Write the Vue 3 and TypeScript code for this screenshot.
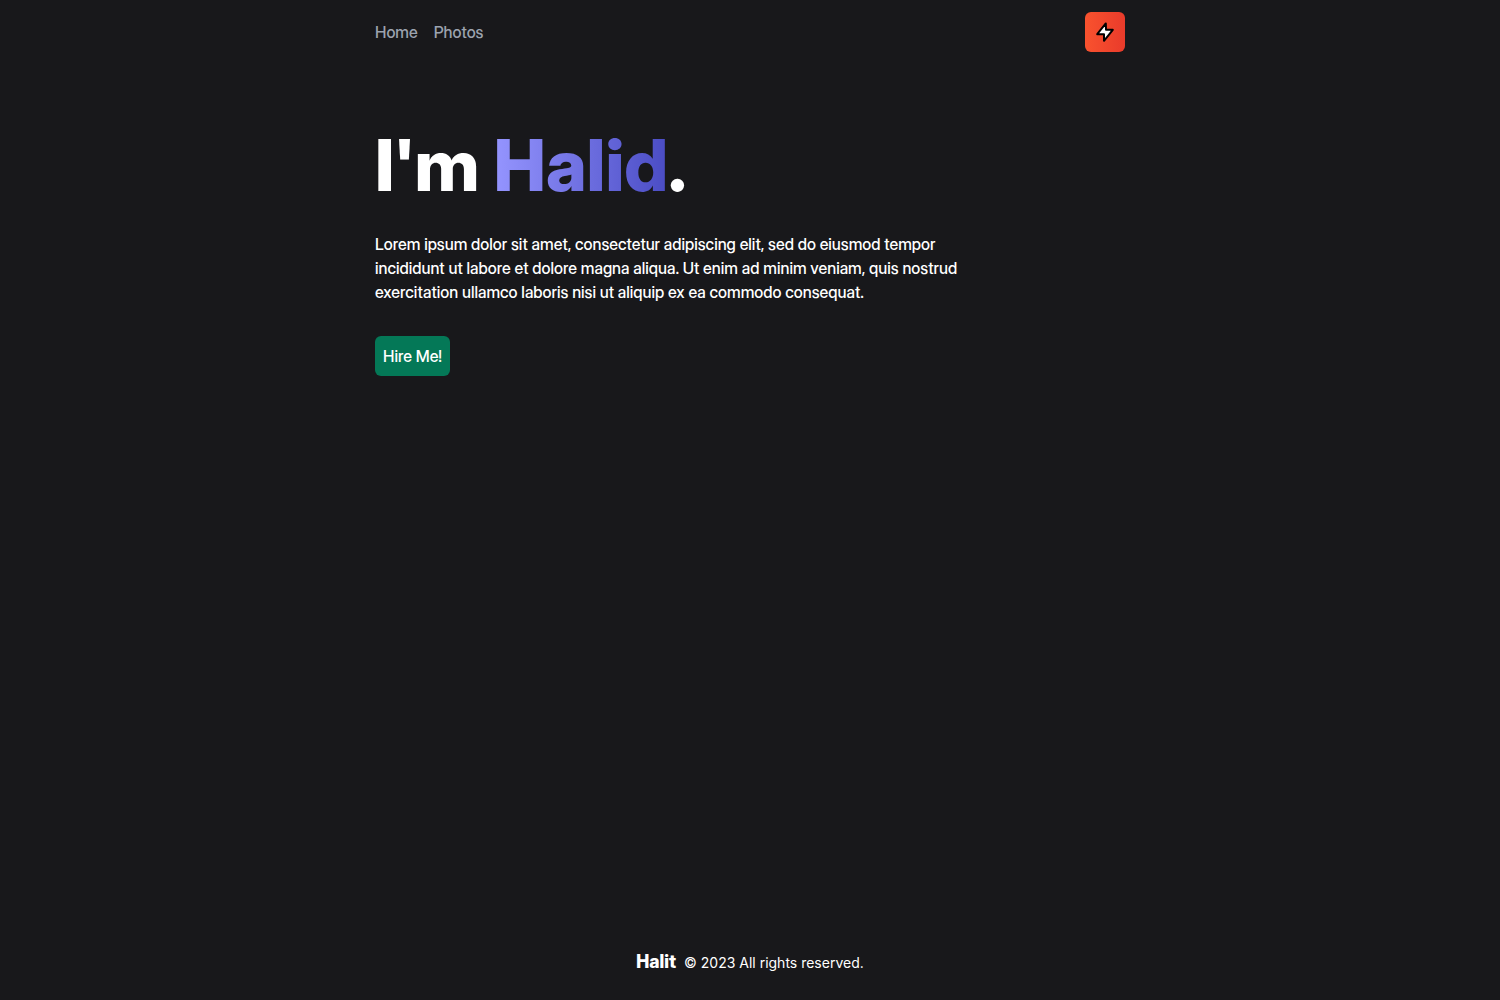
<script setup lang="ts">
interface NavItem {
  label: string
  href: string
}

const navItems: NavItem[] = [
  { label: 'Home', href: '#home' },
  { label: 'Photos', href: '#photos' },
]
</script>

<template>
  <div class="page">
    <header class="header">
      <nav class="nav" aria-label="Main">
        <a v-for="item in navItems" :key="item.href" class="nav-link" :href="item.href">{{ item.label }}</a>
      </nav>
      <button class="theme-toggle" type="button" aria-label="Toggle theme">
        <svg class="bolt" viewBox="0 0 20 20" fill="#fff" stroke="#000" stroke-width="2" stroke-linejoin="round" aria-hidden="true">
          <path d="M10.8 1.4 2.2 12.2H9L9 18.8 17.8 7.8H11z" />
        </svg>
      </button>
    </header>
    <main class="hero">
      <h1 class="title">I'm <span class="name">Halid</span>.</h1>
      <p class="intro">
        Lorem ipsum dolor sit amet, consectetur adipiscing elit, sed do eiusmod tempor incididunt ut labore et dolore
        magna aliqua. Ut enim ad minim veniam, quis nostrud exercitation ullamco laboris nisi ut aliquip ex ea commodo
        consequat.
      </p>
      <button class="hire" type="button">Hire Me!</button>
    </main>
    <footer class="footer">
      <strong class="brand">Halit</strong>
      <small class="copyright">© 2023 All rights reserved.</small>
    </footer>
  </div>
</template>

<style>
body {
  margin: 0;
  background: #18181b;
}
</style>

<style scoped>
.page {
  box-sizing: border-box;
  display: flex;
  flex-direction: column;
  width: 50%;
  min-width: 320px;
  min-height: 100vh;
  margin: 0 auto;
  color: #fff;
  font-family: "Inter Display", Inter, sans-serif;
  font-size: 16px;
  font-weight: 500;
  line-height: 24px;
}

.header {
  display: flex;
  align-items: center;
  justify-content: space-between;
  padding: 12px 0;
}

.nav {
  display: flex;
  gap: 16px;
}

.nav-link {
  color: #9ca3af;
  text-decoration: none;
}

.theme-toggle {
  display: flex;
  align-items: center;
  justify-content: center;
  width: 40px;
  height: 40px;
  padding: 0;
  border: 0;
  border-radius: 6px;
  background: linear-gradient(to right, #f9522e, #e93b2b);
  cursor: pointer;
}

.bolt {
  width: 20px;
  height: 20px;
}

.hero {
  flex: 1;
  padding-top: 64px;
}

.title {
  margin: 0 0 30px;
  font-size: 72px;
  font-weight: 800;
  line-height: 74px;
}

.name {
  background: linear-gradient(to right, #9595ff, #4a4cc4);
  background-clip: text;
  color: transparent;
}

.intro {
  max-width: 600px;
  margin: 0 0 32px;
}

.hire {
  padding: 8px;
  border: 0;
  border-radius: 6px;
  background: #047857;
  color: #fff;
  font: inherit;
  cursor: pointer;
}

.footer {
  display: flex;
  align-items: baseline;
  justify-content: center;
  gap: 8px;
  padding: 24px 0;
}

.brand {
  font-size: 18px;
  font-weight: 800;
  line-height: 28px;
}

.copyright {
  font-family: Inter, sans-serif;
  font-size: 14px;
  font-weight: 400;
  line-height: 20px;
}
</style>
